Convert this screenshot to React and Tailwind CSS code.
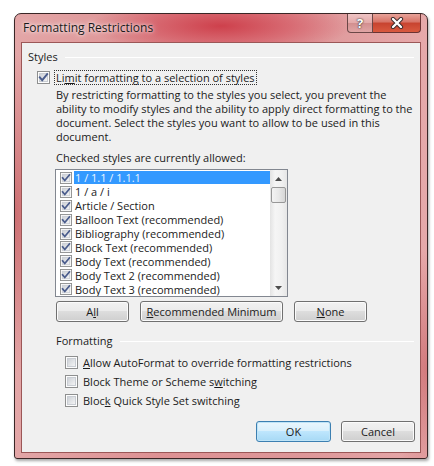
import React from "react";

const FONT = { fontFamily: '"Open Sans", "Noto Sans", sans-serif' };

function CheckBox({ checked, size = 13 }) {
  return (
    <svg width={size} height={size} viewBox="0 0 13 13" className="shrink-0 block">
      <defs>
        <linearGradient id="cbg" x1="0" y1="0" x2="1" y2="1">
          <stop offset="0" stopColor="#cbcfd5" />
          <stop offset="1" stopColor="#f6f6f6" />
        </linearGradient>
      </defs>
      <rect x="0.5" y="0.5" width="12" height="12" fill="#fdfdfd" stroke="#8e8f8f" />
      <rect x="2.5" y="2.5" width="8" height="8" fill="url(#cbg)" stroke="#c9cdd3" />
      {checked && (
        <path d="M2.8 6.4 L5.2 9.2 L10.2 3.2" fill="none" stroke="#4a5c8c" strokeWidth="1.9" strokeLinecap="square" />
      )}
    </svg>
  );
}

function WinButton({ children, w, def }) {
  return (
    <div
      className={`h-[21px] rounded-[3px] border flex items-center justify-center text-[#1b1b1b] ${
        def
          ? "border-[#3c7fb1] bg-[linear-gradient(180deg,#eaf6fd_0%,#d9f0fc_45%,#bee6fd_50%,#a7d9f5_100%)] shadow-[inset_0_0_0_1px_#bfe4f7]"
          : "border-[#707070] bg-[linear-gradient(180deg,#f2f2f2_0%,#ebebeb_45%,#dddddd_50%,#cfcfcf_100%)] shadow-[inset_0_0_0_1px_#fbfbfb]"
      }`}
      style={{ width: w }}
    >
      {children}
    </div>
  );
}

const styles = [
  "1 / 1.1 / 1.1.1",
  "1 / a / i",
  "Article / Section",
  "Balloon Text (recommended)",
  "Bibliography (recommended)",
  "Block Text (recommended)",
  "Body Text (recommended)",
  "Body Text 2 (recommended)",
  "Body Text 3 (recommended)",
];

export default function App() {
  return (
    <div className="w-[434px] h-[466px] bg-white pl-[14px] pt-[13px]" style={FONT}>
      <div className="w-[414px] h-[446px] flex flex-col border border-[#3a2626] rounded-t-[7px] rounded-b-[3px] bg-[radial-gradient(ellipse_130px_30px_at_50%_12px,rgba(205,60,72,0.95),rgba(212,80,92,0.6)_55%,transparent_100%),radial-gradient(ellipse_40px_160px_at_0%_45%,rgba(185,65,70,0.55),transparent),radial-gradient(ellipse_40px_120px_at_100%_80%,rgba(185,65,70,0.45),transparent),linear-gradient(90deg,#e3a6a7_0%,#dd9193_35%,#de9799_70%,#e6a9aa_100%)] shadow-[1px_2px_3px_rgba(0,0,0,0.35)]">
        {/* title bar */}
        <div className="h-[28px] flex items-start">
          <div className="pl-[8px] pt-[5px] text-[12px] text-[#1a1a1a] leading-[18px] [text-shadow:0_0_6px_rgba(255,255,255,0.9),0_0_3px_rgba(255,255,255,0.8)]">
            Formatting Restrictions
          </div>
          <div className="ml-auto mr-[6px] flex">
            <div className="w-[26px] h-[19px] rounded-bl-[4px] border border-t-0 border-[#6b4747] bg-[linear-gradient(180deg,#efc4c4_0%,#e3a9a9_50%,#d28f8f_51%,#e0a5a5_100%)] flex items-center justify-center text-white font-bold text-[13px] leading-none [text-shadow:0_0_1px_#333,0_0_2px_#333]">
              ?
            </div>
            <div className="w-[48px] h-[19px] rounded-br-[4px] border border-l-0 border-t-0 border-[#6b3333] bg-[linear-gradient(180deg,#e8a39a_0%,#d77265_45%,#c7432f_50%,#d9593f_100%)] flex items-center justify-center">
              <svg width="14" height="12" viewBox="0 0 14 12">
                <path d="M3 2 L11 10 M11 2 L3 10" stroke="#3a2a2a" strokeWidth="4.2" strokeLinecap="round" />
                <path d="M3 2 L11 10 M11 2 L3 10" stroke="#ffffff" strokeWidth="2.4" strokeLinecap="round" />
              </svg>
            </div>
          </div>
        </div>
        {/* client area */}
        <div className="ml-[6px] w-[400px] h-[411px] bg-[#f0f0f0] border border-[#9b5757] text-[11px] text-[#1b1b1b] leading-[14px]">
          {/* Styles header */}
          <div className="flex items-center pl-[6px] pr-[6px] mt-[7px] h-[14px]">
            <span>Styles</span>
            <div className="flex-1 ml-[7px] h-px bg-[#dcdcdc] border-b border-white" />
          </div>
          {/* Limit checkbox */}
          <div className="flex items-center pl-[15px] mt-[6px] h-[15px]">
            <CheckBox checked />
            <span className="ml-[4px] px-[1px] border border-dotted border-[#333] leading-[13px]">
              Li<u>m</u>it formatting to a selection of styles
            </span>
          </div>
          <div className="pl-[34px] mt-[3px] leading-[14px] whitespace-nowrap">
            By restricting formatting to the styles you select, you prevent the
            <br />
            ability to modify styles and the ability to apply direct formatting to the
            <br />
            document. Select the styles you want to allow to be used in this
            <br />
            document.
          </div>
          <div className="pl-[34px] mt-[7px]">Checked styles are currently allowed:</div>
          {/* list */}
          <div className="ml-[33px] mt-[4px] w-[233px] h-[128px] bg-white border border-[#828790] flex">
            <div className="flex-1 pt-[1px] pl-[4px] overflow-hidden">
              {styles.map((s, i) => (
                <div key={s} className="h-[13.9px] flex items-center">
                  <CheckBox checked size={12} />
                  <span
                    className={`ml-[2px] pl-[1px] flex-1 h-[13px] leading-[13px] ${
                      i === 0 ? "bg-[#3399ff] text-[#e9f6ff]" : ""
                    }`}
                  >
                    {s}
                  </span>
                </div>
              ))}
            </div>
            <div className="w-[17px] bg-[linear-gradient(90deg,#e3e3e3,#f5f5f5_30%,#f0f0f0_70%,#e6e6e6)] flex flex-col items-center">
              <div className="h-[17px] flex items-center justify-center">
                <svg width="7" height="4" viewBox="0 0 7 4">
                  <path d="M0 4 L3.5 0 L7 4 Z" fill="#4d4d4d" />
                </svg>
              </div>
              <div className="w-[15px] h-[16px] rounded-[2px] border border-[#979797] bg-[linear-gradient(90deg,#f3f3f3,#e8e8e8_50%,#d6d6d6)]" />
              <div className="flex-1" />
              <div className="h-[17px] flex items-center justify-center">
                <svg width="7" height="4" viewBox="0 0 7 4">
                  <path d="M0 0 L3.5 4 L7 0 Z" fill="#4d4d4d" />
                </svg>
              </div>
            </div>
          </div>
          {/* buttons */}
          <div className="flex ml-[34px] mt-[4px] gap-[11px]">
            <WinButton w={73}>
              A<u>l</u>l
            </WinButton>
            <WinButton w={143}>
              <u>R</u>ecommended Minimum
            </WinButton>
            <WinButton w={73}>
              <u>N</u>one
            </WinButton>
          </div>
          {/* Formatting header */}
          <div className="flex items-center pl-[34px] pr-[6px] mt-[12px] h-[14px]">
            <span>Formatting</span>
            <div className="flex-1 ml-[8px] h-px bg-[#dcdcdc] border-b border-white" />
          </div>
          <div className="pl-[43px] mt-[8px] flex flex-col gap-[6px]">
            <div className="flex items-center h-[13px]">
              <CheckBox />
              <span className="ml-[5px]">
                <u>A</u>llow AutoFormat to override formatting restrictions
              </span>
            </div>
            <div className="flex items-center h-[13px]">
              <CheckBox />
              <span className="ml-[5px]">
                Block Theme or Scheme s<u>w</u>itching
              </span>
            </div>
            <div className="flex items-center h-[13px]">
              <CheckBox />
              <span className="ml-[5px]">
                Bloc<u>k</u> Quick Style Set switching
              </span>
            </div>
          </div>
          {/* OK / Cancel */}
          <div className="flex ml-[234px] mt-[14px] gap-[10px]">
            <WinButton w={75} def>
              OK
            </WinButton>
            <WinButton w={74}>Cancel</WinButton>
          </div>
        </div>
      </div>
    </div>
  );
}
